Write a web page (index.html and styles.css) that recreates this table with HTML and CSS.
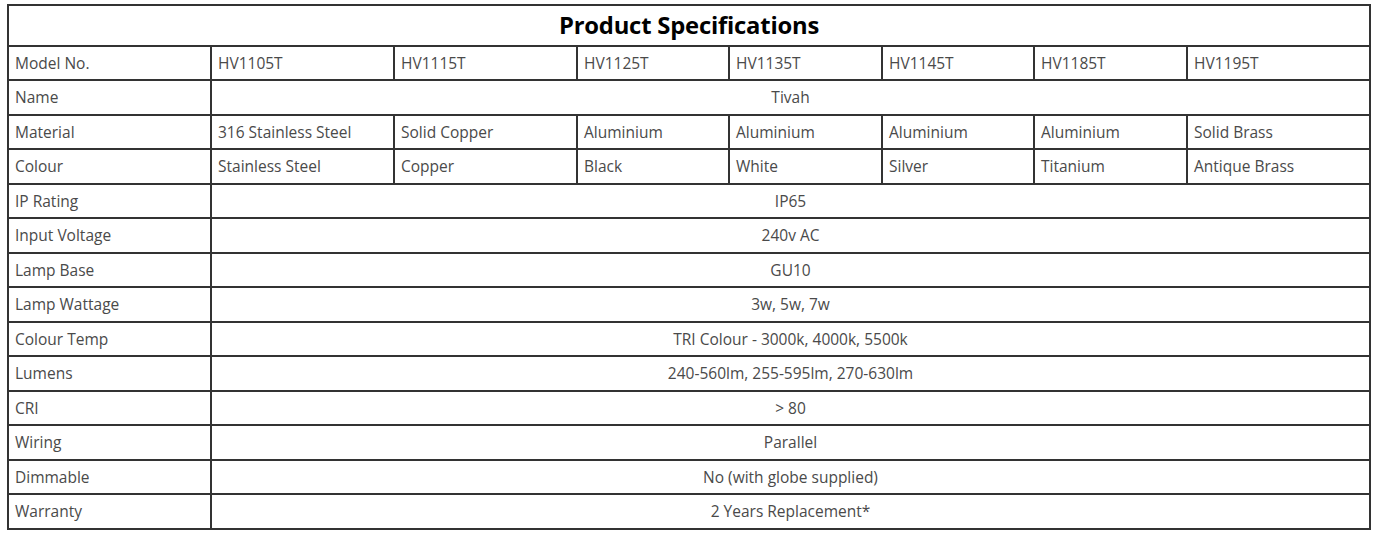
FILE: index.html
```html
<!DOCTYPE html>
<html>
<head>
<meta charset="utf-8">
<link rel="stylesheet" href="styles.css">
</head>
<body>
<table class="spec">
  <colgroup>
    <col class="c-label">
    <col class="c-wide"><col class="c-wide"><col class="c-narrow"><col class="c-mid"><col class="c-narrow"><col class="c-mid"><col class="c-wide">
  </colgroup>
  <tr class="title-row"><th colspan="8">Product Specifications</th></tr>
  <tr><td>Model No.</td><td>HV1105T</td><td>HV1115T</td><td>HV1125T</td><td>HV1135T</td><td>HV1145T</td><td>HV1185T</td><td>HV1195T</td></tr>
  <tr><td>Name</td><td class="span" colspan="7">Tivah</td></tr>
  <tr><td>Material</td><td>316 Stainless Steel</td><td>Solid Copper</td><td>Aluminium</td><td>Aluminium</td><td>Aluminium</td><td>Aluminium</td><td>Solid Brass</td></tr>
  <tr><td>Colour</td><td>Stainless Steel</td><td>Copper</td><td>Black</td><td>White</td><td>Silver</td><td>Titanium</td><td>Antique Brass</td></tr>
  <tr><td>IP Rating</td><td class="span" colspan="7">IP65</td></tr>
  <tr><td>Input Voltage</td><td class="span" colspan="7">240v AC</td></tr>
  <tr><td>Lamp Base</td><td class="span" colspan="7">GU10</td></tr>
  <tr><td>Lamp Wattage</td><td class="span" colspan="7">3w, 5w, 7w</td></tr>
  <tr><td>Colour Temp</td><td class="span" colspan="7">TRI Colour - 3000k, 4000k, 5500k</td></tr>
  <tr><td>Lumens</td><td class="span" colspan="7">240-560lm, 255-595lm, 270-630lm</td></tr>
  <tr><td>CRI</td><td class="span" colspan="7">&gt; 80</td></tr>
  <tr><td>Wiring</td><td class="span" colspan="7">Parallel</td></tr>
  <tr><td>Dimmable</td><td class="span" colspan="7">No (with globe supplied)</td></tr>
  <tr><td>Warranty</td><td class="span" colspan="7">2 Years Replacement*</td></tr>
</table>
</body>
</html>
```
FILE: styles.css
```css
html, body {
  margin: 0;
  padding: 0;
  background: #ffffff;
}
.spec {
  margin: 4px 0 0 7px;
  width: 1361px;
  border-collapse: collapse;
  table-layout: fixed;
  font-family: "Open Sans", "Liberation Sans", sans-serif;
  font-size: 15.5px;
  color: #4a4a4a;
  border: 2px solid #333333;
}
.c-label { width: 203px; }
.c-wide { width: 183px; }
.c-mid { width: 153px; }
.c-narrow { width: 152px; }
.spec th, .spec td {
  border: 2px solid #333333;
  padding: 0 0 0 6px;
  text-align: left;
  white-space: nowrap;
  height: 32.5px;
  line-height: 20px;
}
.title-row th {
  height: 38.5px;
  text-align: center;
  font-size: 23.8px;
  font-weight: 700;
  color: #000000;
  padding: 0;
  letter-spacing: -0.2px;
}
.spec td.span {
  text-align: center;
  padding: 0;
}
```
